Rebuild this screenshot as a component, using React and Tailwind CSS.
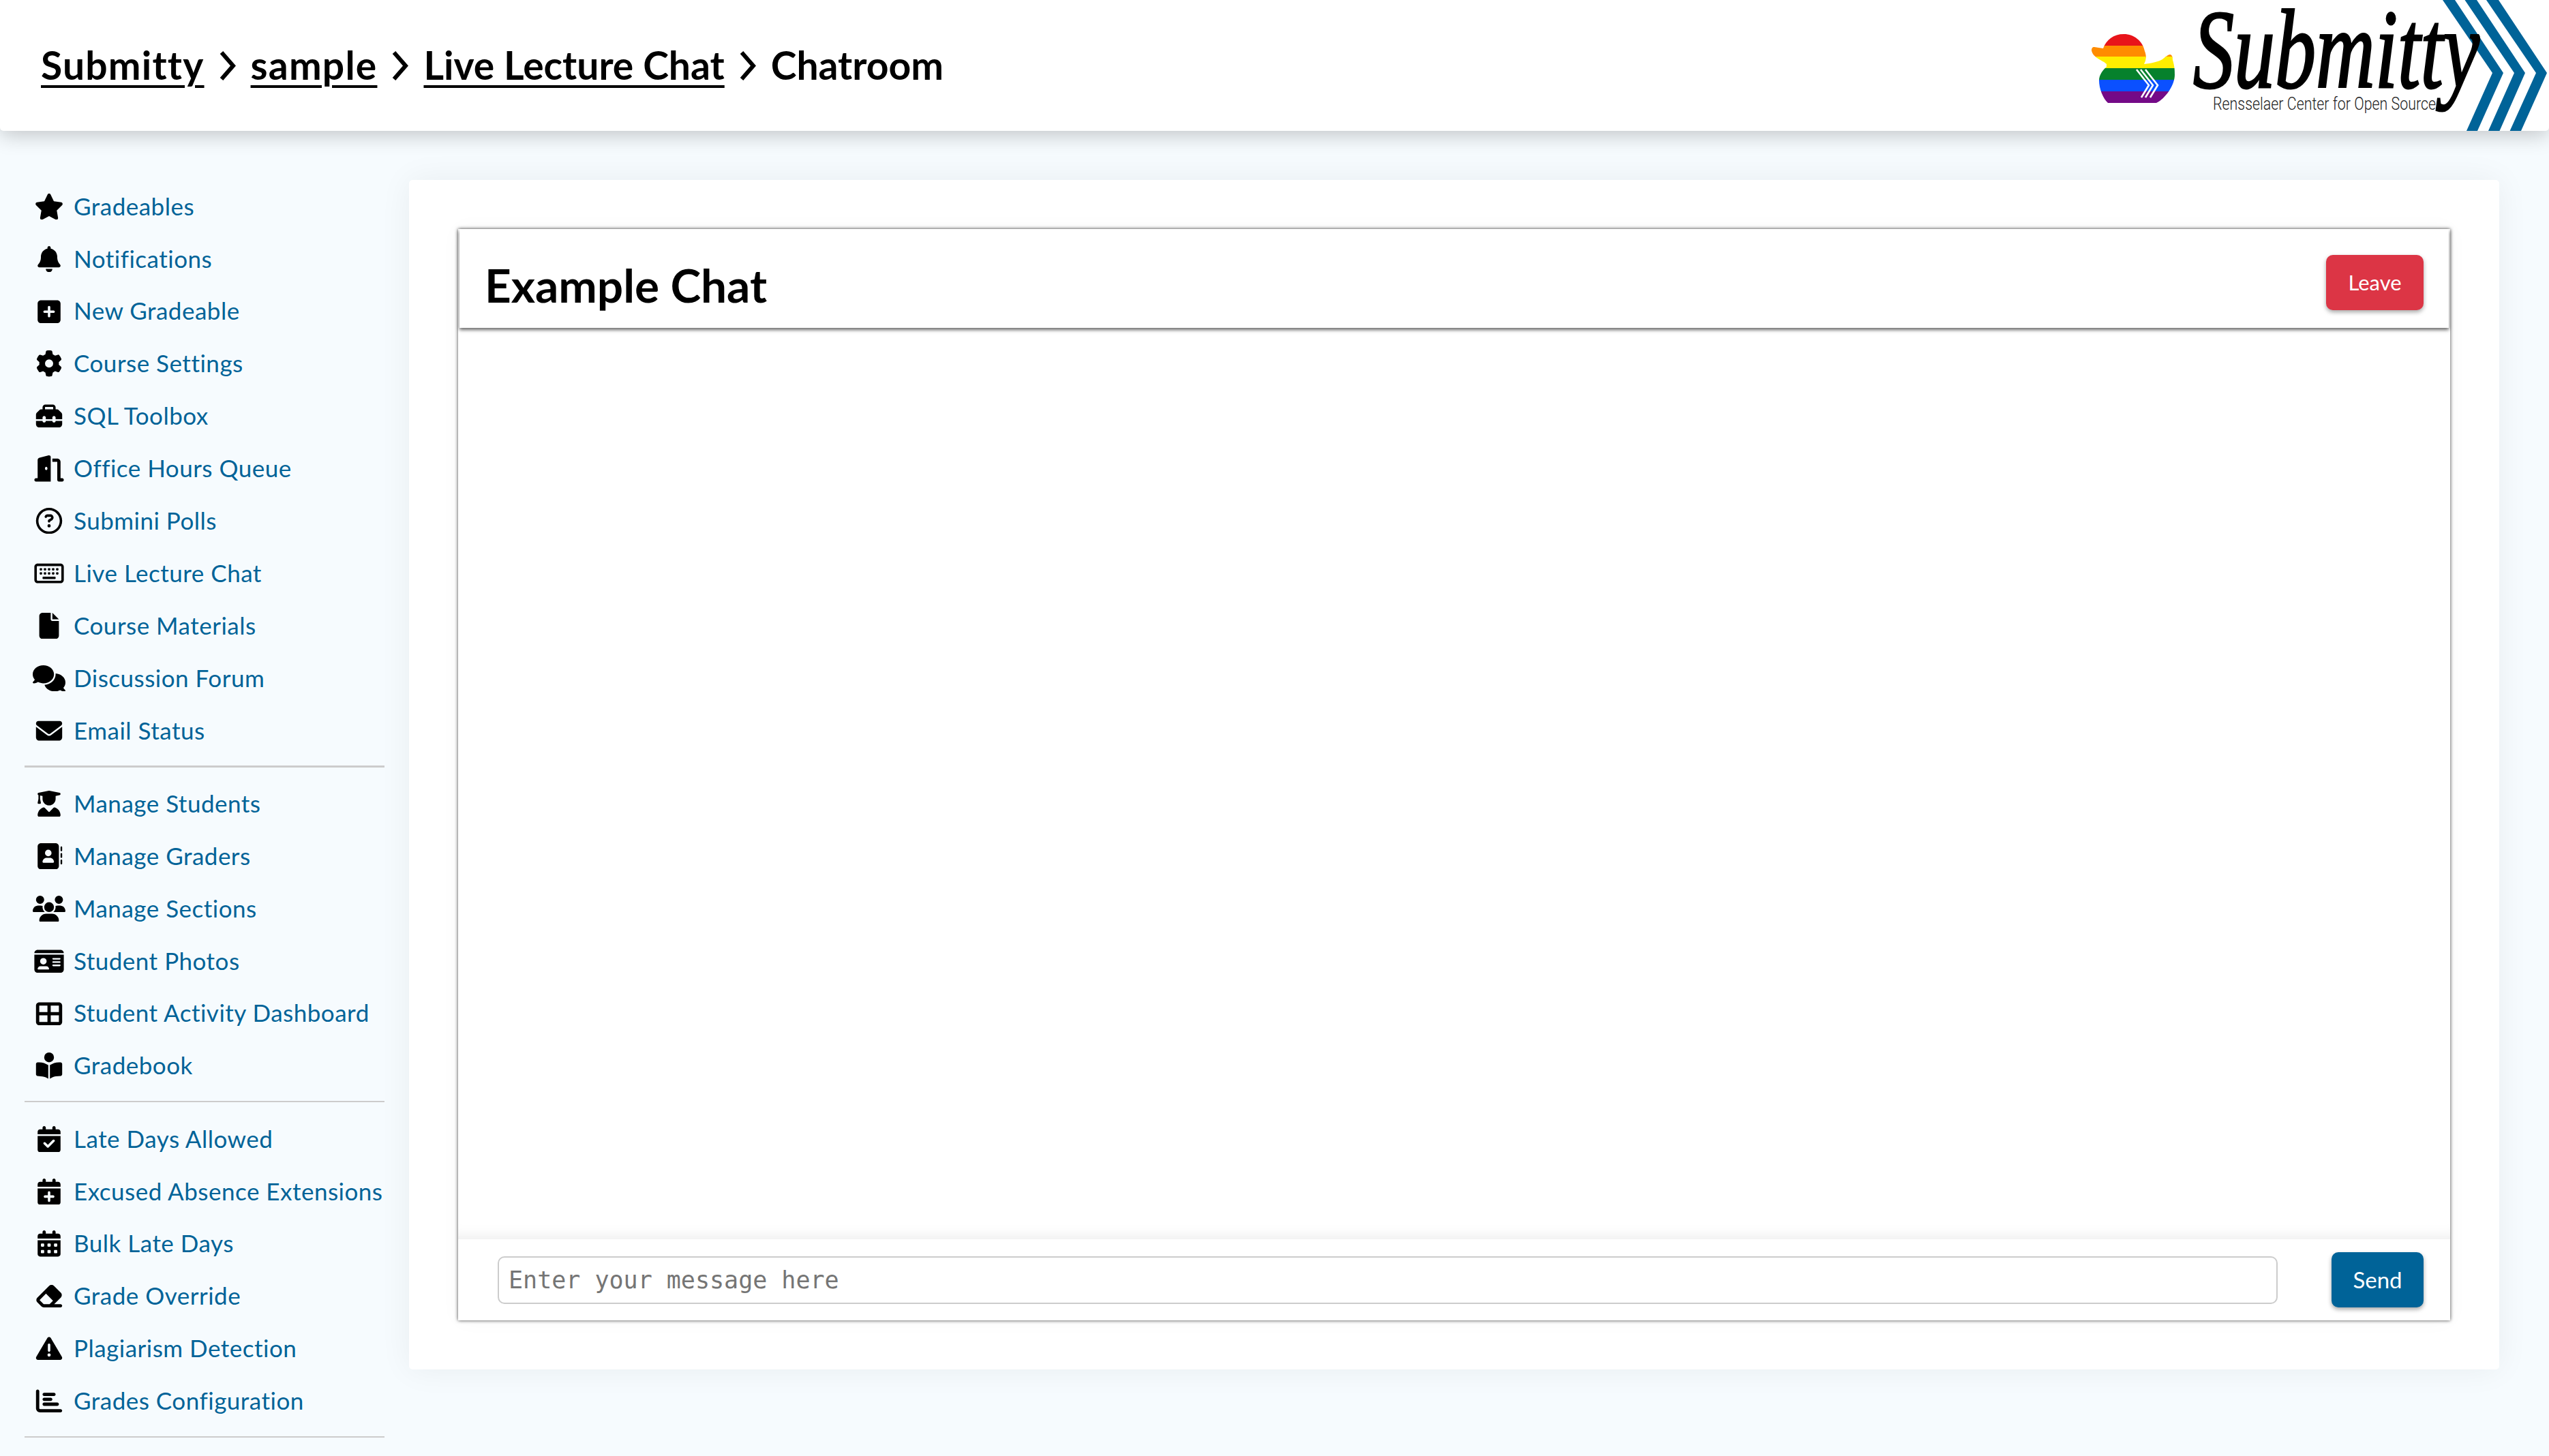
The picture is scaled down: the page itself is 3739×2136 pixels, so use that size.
import {
  FaStar, FaBell, FaSquarePlus, FaGear, FaToolbox, FaDoorOpen, FaRegCircleQuestion, FaRegKeyboard,
  FaFile, FaComments, FaEnvelope, FaUserGraduate, FaAddressBook, FaUsers, FaIdCard, FaTableCellsLarge,
  FaBookOpenReader, FaCalendarCheck, FaCalendarPlus, FaCalendarDays, FaEraser, FaTriangleExclamation,
  FaChartBar,
} from "react-icons/fa6";

const groups = [
  [
    ["Gradeables", FaStar],
    ["Notifications", FaBell],
    ["New Gradeable", FaSquarePlus],
    ["Course Settings", FaGear],
    ["SQL Toolbox", FaToolbox],
    ["Office Hours Queue", FaDoorOpen],
    ["Submini Polls", FaRegCircleQuestion],
    ["Live Lecture Chat", FaRegKeyboard],
    ["Course Materials", FaFile],
    ["Discussion Forum", FaComments],
    ["Email Status", FaEnvelope],
  ],
  [
    ["Manage Students", FaUserGraduate],
    ["Manage Graders", FaAddressBook],
    ["Manage Sections", FaUsers],
    ["Student Photos", FaIdCard],
    ["Student Activity Dashboard", FaTableCellsLarge],
    ["Gradebook", FaBookOpenReader],
  ],
  [
    ["Late Days Allowed", FaCalendarCheck],
    ["Excused Absence Extensions", FaCalendarPlus],
    ["Bulk Late Days", FaCalendarDays],
    ["Grade Override", FaEraser],
    ["Plagiarism Detection", FaTriangleExclamation],
    ["Grades Configuration", FaChartBar],
  ],
];

function Chevron() {
  return (
    <svg viewBox="0 0 26 43" className="w-[26px] h-[43px] shrink-0">
      <path d="M4 2 L21 21.5 L4 41" fill="none" stroke="black" strokeWidth="6" strokeLinejoin="miter" />
    </svg>
  );
}

function Logo() {
  const stripes = [
    ["#e8141a", 50],
    ["#ff8c00", 67],
    ["#ffee00", 83],
    ["#06812c", 100],
    ["#0b50ff", 117],
    ["#740a87", 134],
  ];
  return (
    <svg viewBox="0 0 739 192" className="w-[739px] h-[192px] shrink-0">
      <defs>
        <clipPath id="duck">
          <path d="M115.5 50 C130 50 143 60 146 75 C149 83 148 88 145 94 C155 93 168 90 172 87 C176 84 180 80 183 80 C186 80 187 84 187 88 C190 98 190 104 190 110 C190 125 176 145 163 151 L92 151 C85 145 79 130 79 118 C79 110 85 102 90 98 L90 94 C84 88 70 85 68 74 C68 71 69 69 72 69 L85 71 C90 58 100 50 115.5 50 Z" />
        </clipPath>
      </defs>
      <g clipPath="url(#duck)">
        {stripes.map(([c, y]) => (
          <rect key={c} x="60" y={y} width="140" height="17.5" fill={c} />
        ))}
      </g>
      <g fill="none" stroke="white" strokeWidth="2.6">
        <path d="M134 102 L152 125 L141 143" />
        <path d="M140 102 L158 125 L147 143" />
        <path d="M147 102 L165 125 L154 143" />
      </g>
      <g fill="#006398">
        <polygon points="583,0 601,0 672,107 634,192 618,192 656,107" />
        <polygon points="615.5,0 633,0 704,107 666.5,192 650,192 688,107" />
        <polygon points="647,0 665,0 736,107 698,192 681.6,192 720,107" />
      </g>
      <text x="217" y="128" textLength="420" lengthAdjust="spacingAndGlyphs" fontFamily="'Liberation Serif', serif" fontStyle="italic" fontSize="165" stroke="black" strokeWidth="3" fill="black">Submitty</text>
      <text x="246" y="161" textLength="327" lengthAdjust="spacingAndGlyphs" fontFamily="Roboto, sans-serif" fontWeight="300" fontSize="25" fill="#222">Rensselaer Center for Open Source</text>
    </svg>
  );
}

export default function App() {
  return (
    <div className="h-screen overflow-hidden bg-[#f6fbfe] font-['Lato',sans-serif]">
      <header className="relative z-10 h-[192px] bg-white rounded-b-[5px] shadow-[0_6px_30px_rgba(0,0,0,0.22)] flex items-center justify-between pl-[60px]">
        <nav className="flex items-center gap-[21px] text-[57px] font-bold text-black">
          <a className="underline decoration-[4px] underline-offset-[8px] tracking-[1.2px]" href="#">Submitty</a>
          <Chevron />
          <a className="underline decoration-[4px] underline-offset-[8px] tracking-[1.2px]" href="#">sample</a>
          <Chevron />
          <a className="underline decoration-[4px] underline-offset-[8px]" href="#">Live Lecture Chat</a>
          <Chevron />
          <span>Chatroom</span>
        </nav>
        <Logo />
      </header>

      <div className="flex">
        <aside className="w-[600px] shrink-0 px-[36px] pt-[72.5px]">
          {groups.map((items, i) => (
            <div key={i}>
              {items.map(([label, Icon]) => (
                <a key={label} href="#" className="h-[76.9px] pl-[12px] flex items-center gap-[12px] text-[35px] tracking-[0.5px] text-[#006398] whitespace-nowrap">
                  <span className="w-[48px] flex justify-center text-black shrink-0">
                    <Icon className="w-[48px] h-[38.4px]" />
                  </span>
                  <span className="pb-[2px]">{label}</span>
                </a>
              ))}
              <div className="h-[2.4px] bg-[#cccccc] mt-[13px] mb-[15px]" />
            </div>
          ))}
        </aside>

        <main className="mt-[72px] w-[3066px] h-[1745px] p-[72px] bg-white rounded-[5px] shadow-[0_0_48px_rgba(0,0,0,0.06)]">
          <div className="h-full flex flex-col shadow-[0_0_5px_rgba(0,0,0,0.75),0_0_30px_rgba(0,0,0,0.03)]">
            <div className="h-[145px] mx-[2px] pt-[12px] pl-[37px] pr-[37px] flex items-center justify-between shadow-[0_3px_5px_rgba(0,0,0,0.6)]">
              <h1 className="text-[67.5px] font-bold text-black pt-[6px]">Example Chat</h1>
              <button className="w-[143px] h-[81px] rounded-[10px] bg-[#dc3545] text-white text-[31px] shadow-[0_3px_6px_rgba(0,0,0,0.35)]">Leave</button>
            </div>
            <div className="flex-1 shadow-[inset_0_-24px_24px_-24px_rgba(0,0,0,0.1)]" />
            <div className="h-[119px] pl-[58px] pr-[39px] flex items-center gap-[79px]">
              <input
                placeholder="Enter your message here"
                className="flex-1 h-[70px] px-[14px] rounded-[10px] border-[2.4px] border-[#cccccc] bg-white font-['DejaVu_Sans_Mono',monospace] text-[35px] placeholder:text-[#757575] outline-none"
              />
              <button className="w-[135px] h-[81px] rounded-[10px] bg-[#006398] text-white text-[33px] shadow-[0_3px_6px_rgba(0,0,0,0.35)]">Send</button>
            </div>
          </div>
        </main>
      </div>
    </div>
  );
}
